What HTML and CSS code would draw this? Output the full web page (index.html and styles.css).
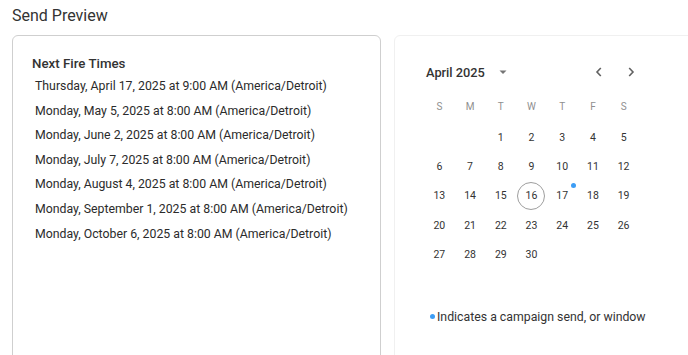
FILE: index.html
```html
<!DOCTYPE html>
<html lang="en">

<head>
    <meta charset="UTF-8">
    <meta name="viewport" content="width=device-width, initial-scale=1.0">
    <title>Send Preview</title>
    <link rel="stylesheet" href="styles.css">
</head>

<body>

    <h2 class="title">Send Preview</h2>

    <div class="panels">

        <div class="card fire-card">
            <h3 class="fire-heading">Next Fire Times</h3>
            <ul class="fire-list">
                <li>Thursday, April 17, 2025 at 9:00 AM (America/Detroit)</li>
                <li>Monday, May 5, 2025 at 8:00 AM (America/Detroit)</li>
                <li>Monday, June 2, 2025 at 8:00 AM (America/Detroit)</li>
                <li>Monday, July 7, 2025 at 8:00 AM (America/Detroit)</li>
                <li>Monday, August 4, 2025 at 8:00 AM (America/Detroit)</li>
                <li>Monday, September 1, 2025 at 8:00 AM (America/Detroit)</li>
                <li>Monday, October 6, 2025 at 8:00 AM (America/Detroit)</li>
            </ul>
        </div>

        <div class="card cal-card">
            <div class="calendar">
                <div class="cal-header">
                    <div class="cal-label">
                        <span>April 2025</span>
                        <svg class="caret" width="10" height="10" viewBox="0 0 10 10">
                            <path d="M1.5 3.5 L8.5 3.5 L5 7 Z" fill="#757575" />
                        </svg>
                    </div>
                    <div class="cal-nav">
                        <button type="button" class="nav-btn">
                            <svg width="10" height="12" viewBox="0 0 10 12">
                                <path d="M6.8 2 L3 6 L6.8 10" fill="none" stroke="#616161" stroke-width="1.6" />
                            </svg>
                        </button>
                        <button type="button" class="nav-btn">
                            <svg width="10" height="12" viewBox="0 0 10 12">
                                <path d="M3.2 2 L7 6 L3.2 10" fill="none" stroke="#616161" stroke-width="1.6" />
                            </svg>
                        </button>
                    </div>
                </div>

                <div class="weekdays">
                    <span>S</span><span>M</span><span>T</span><span>W</span><span>T</span><span>F</span><span>S</span>
                </div>

                <div class="days" id="days"></div>
            </div>

            <p class="legend"><span class="dot"></span>Indicates a campaign send, or window</p>
        </div>

    </div>

    <script>
        // April 2025 starts on a Tuesday
        const daysEl = document.getElementById('days');
        const offset = 2;
        const today = 16;
        const sends = [17];

        for (let i = 0; i < offset; i++) {
            daysEl.appendChild(document.createElement('span'));
        }

        for (let d = 1; d <= 30; d++) {
            const cell = document.createElement('span');
            cell.className = 'day';
            if (d === today) cell.classList.add('today');
            cell.innerHTML = '<b>' + d + '</b>';
            if (sends.includes(d)) {
                const mark = document.createElement('i');
                mark.className = 'send-dot';
                cell.appendChild(mark);
            }
            daysEl.appendChild(cell);
        }
    </script>
</body>

</html>
```

FILE: styles.css
```css
html {
    overflow: hidden;
}

body {
    font-family: Roboto, "Liberation Sans", Arial, sans-serif;
    color: #333;
    background-color: #fff;
    margin: 0;
    padding: 4px 0 0 12px;
}

.title {
    margin: 0 0 7px;
    font-size: 16px;
    font-weight: 400;
    line-height: 24px;
    color: #333;
}

.panels {
    display: flex;
    gap: 13px;
}

.card {
    box-sizing: border-box;
    min-height: 340px;
    border-radius: 6px;
    background-color: #fff;
}

.fire-card {
    width: 369px;
    flex: none;
    border: 1px solid #cfcfcf;
    padding: 18px 19px;
}

.fire-heading {
    margin: 0;
    font-size: 13.3px;
    font-weight: 500;
    line-height: 20px;
    color: #333;
}

.fire-list {
    list-style: none;
    margin: 0;
    padding: 0 0 0 3px;
}

.fire-list li {
    font-size: 12.3px;
    line-height: 24.6px;
    color: #2b2b2b;
    white-space: nowrap;
}

.cal-card {
    width: 340px;
    flex: none;
    border: 1px solid #f0f0f0;
    padding: 21px 0 0 29px;
}

.calendar {
    width: 215px;
}

.cal-header {
    display: flex;
    align-items: center;
    justify-content: space-between;
    height: 30px;
    padding-left: 2px;
}

.cal-label {
    display: flex;
    align-items: center;
    gap: 13px;
    font-size: 12.8px;
    font-weight: 500;
    color: #333;
}

.caret {
    display: block;
}

.cal-nav {
    display: flex;
    gap: 16px;
}

.nav-btn {
    display: flex;
    align-items: center;
    justify-content: center;
    width: 16px;
    height: 20px;
    padding: 0;
    border: none;
    background: none;
    cursor: pointer;
}

.weekdays {
    display: grid;
    grid-template-columns: repeat(7, 1fr);
    height: 24px;
    margin-top: 7px;
    align-items: center;
    text-align: center;
    font-size: 10px;
    color: #8f8f8f;
}

.days {
    display: grid;
    grid-template-columns: repeat(7, 1fr);
    grid-auto-rows: 29.3px;
    margin-top: 4.5px;
}

.day {
    position: relative;
    display: flex;
    align-items: center;
    justify-content: center;
    font-size: 10.5px;
    color: #333;
}

.day b {
    display: flex;
    align-items: center;
    justify-content: center;
    width: 28px;
    height: 28px;
    border-radius: 50%;
    font-weight: 400;
}

.day.today b {
    border: 1px solid #9e9e9e;
    box-sizing: border-box;
}

.send-dot {
    position: absolute;
    top: 2px;
    left: 24.5px;
    width: 5px;
    height: 5px;
    border-radius: 50%;
    background-color: #3d9df5;
}

.legend {
    display: flex;
    align-items: center;
    gap: 2px;
    margin: 40px 0 0 6px;
    font-size: 12.3px;
    line-height: 16px;
    color: #333;
}

.dot {
    width: 5px;
    height: 5px;
    border-radius: 50%;
    background-color: #3d9df5;
}
```
